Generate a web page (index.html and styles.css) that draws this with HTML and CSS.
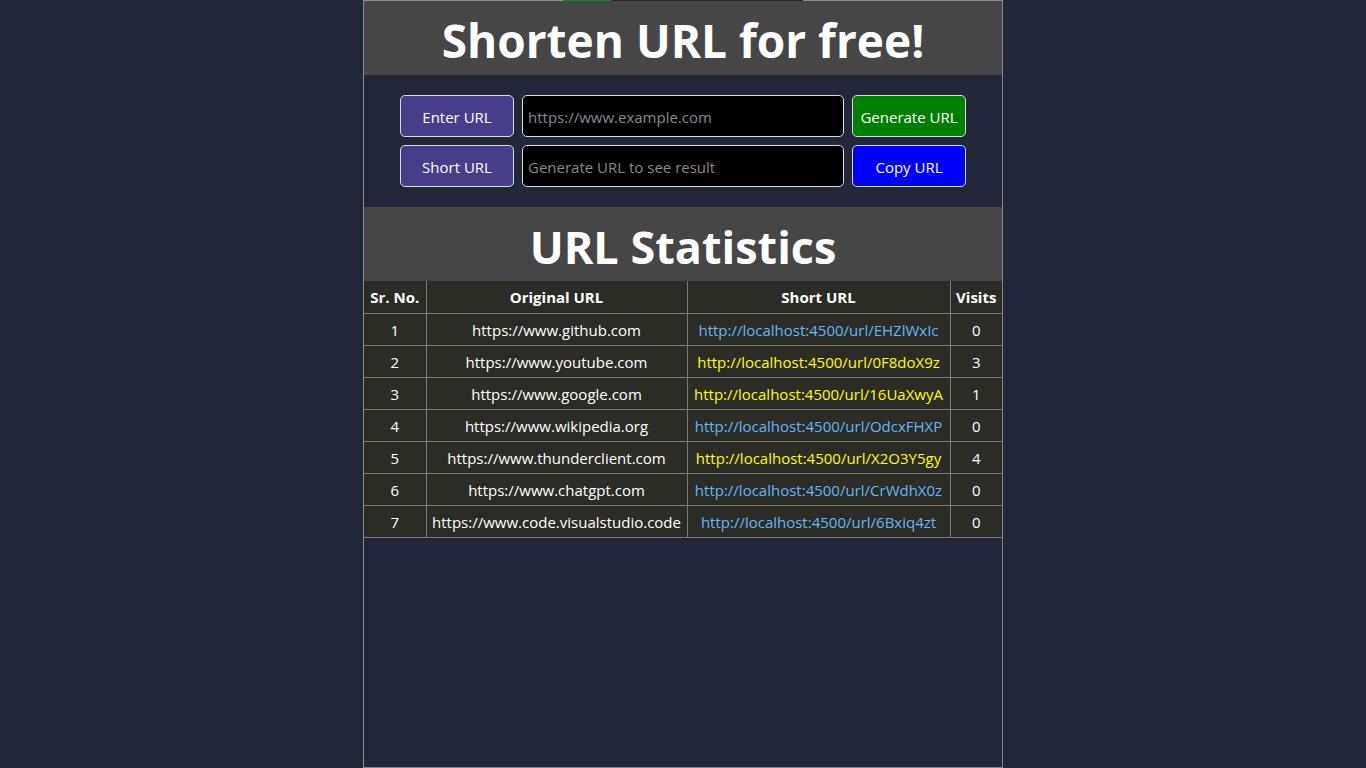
FILE: index.html
```html
<!DOCTYPE html>
<html lang="en">
<head>
<meta charset="utf-8">
<title>URL Shortener</title>
<link rel="stylesheet" href="styles.css">
</head>
<body>
<div class="loader"><span class="loader-fill"></span></div>
<main class="container">
  <header class="banner"><h1>Shorten URL for free!</h1></header>
  <section class="form">
    <button class="label-btn">Enter URL</button>
    <input class="field" type="text" placeholder="https://www.example.com">
    <button class="action green">Generate URL</button>
    <button class="label-btn">Short URL</button>
    <input class="field" type="text" placeholder="Generate URL to see result" readonly>
    <button class="action blue">Copy URL</button>
  </section>
  <header class="banner"><h2>URL Statistics</h2></header>
  <table class="stats">
    <thead>
      <tr><th class="c1">Sr. No.</th><th class="c2">Original URL</th><th class="c3">Short URL</th><th class="c4">Visits</th></tr>
    </thead>
    <tbody>
      <tr><td>1</td><td>https://www.github.com</td><td><a class="link">http://localhost:4500/url/EHZlWxIc</a></td><td>0</td></tr>
      <tr><td>2</td><td>https://www.youtube.com</td><td><a class="link visited">http://localhost:4500/url/0F8doX9z</a></td><td>3</td></tr>
      <tr><td>3</td><td>https://www.google.com</td><td><a class="link visited">http://localhost:4500/url/16UaXwyA</a></td><td>1</td></tr>
      <tr><td>4</td><td>https://www.wikipedia.org</td><td><a class="link">http://localhost:4500/url/OdcxFHXP</a></td><td>0</td></tr>
      <tr><td>5</td><td>https://www.thunderclient.com</td><td><a class="link visited">http://localhost:4500/url/X2O3Y5gy</a></td><td>4</td></tr>
      <tr><td>6</td><td>https://www.chatgpt.com</td><td><a class="link">http://localhost:4500/url/CrWdhX0z</a></td><td>0</td></tr>
      <tr><td>7</td><td>https://www.code.visualstudio.code</td><td><a class="link">http://localhost:4500/url/6Bxiq4zt</a></td><td>0</td></tr>
    </tbody>
  </table>
</main>
</body>
</html>
```

FILE: styles.css
```css
* { box-sizing: border-box; }
html, body { margin: 0; padding: 0; }
body {
  background: #23273a;
  font-family: "Segoe UI", "Open Sans", sans-serif;
  color: #ffffff;
  min-height: 768px;
}
.loader {
  position: absolute;
  top: 0;
  left: 563px;
  width: 240px;
  height: 1px;
  background: #2b2b2b;
  z-index: 2;
}
.loader-fill {
  display: block;
  width: 48px;
  height: 1px;
  background: #0a8a2a;
}
.container {
  width: 640px;
  min-height: 768px;
  margin: 0 auto;
  border: 1px solid #8a8a8a;
  background: #23273a;
}
.banner {
  background: #464646;
  height: 74px;
  padding-top: 4px;
  display: flex;
  align-items: center;
  justify-content: center;
}
.banner h1, .banner h2 {
  margin: 0;
  font-size: 45px;
  font-weight: 700;
  line-height: 1;
  color: #ffffff;
}
.banner h1 { font-size: 46px; }
.form {
  display: grid;
  grid-template-columns: 114px 322px 114px;
  grid-auto-rows: 42px;
  gap: 8px;
  justify-content: center;
  padding: 20px 0;
}
.label-btn, .action, .field {
  font-family: inherit;
  font-size: 15px;
  border: 1px solid #dcdcdc;
  border-radius: 5px;
  color: #ffffff;
  margin: 0;
  padding-top: 2px;
}
.label-btn { background: #483d8b; }
.action.green { background: #008000; }
.action.blue { background: #0000ff; }
.field {
  background: #000000;
  padding: 2px 5px 0;
  outline: none;
}
.field::placeholder { color: #8a8a8a; }
.stats {
  width: 100%;
  border-collapse: collapse;
  background: #2c2c27;
  font-size: 15px;
}
.stats th, .stats td {
  border: 1px solid #7a7a7a;
  height: 32px;
  padding: 1px 4px 0;
  text-align: center;
  white-space: nowrap;
}
.stats tr:first-child th { border-top: none; }
.stats th:first-child, .stats td:first-child { border-left: none; }
.stats th:last-child, .stats td:last-child { border-right: none; }
.stats th { font-weight: 700; }
.c1 { width: 62px; }
.c2 { width: 261px; }
.c3 { width: 263px; }
.c4 { width: 52px; }
.link { color: #6ab4f4; }
.link.visited { color: #ffff00; }
```
